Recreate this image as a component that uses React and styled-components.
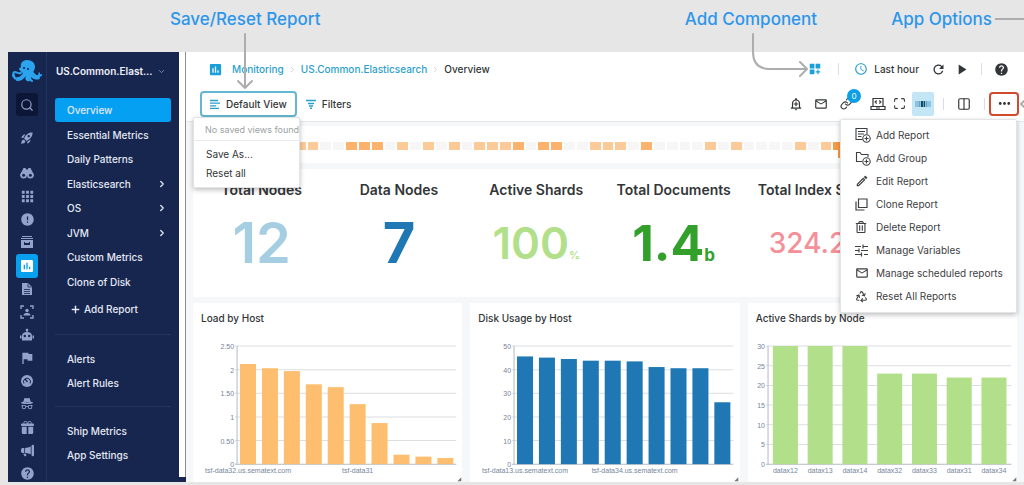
import React from "react";
import styled, { createGlobalStyle } from "styled-components";
import {
  MdAccessTime,
  MdApps,
  MdDashboardCustomize,
  MdError,
  MdFlag,
  MdHelp,
  MdInsertChart,
  MdMailOutline,
  MdMoreHoriz,
  MdOutlineAddAlert,
  MdOutlineEdit,
  MdPlayArrow,
  MdRefresh,
  MdRocketLaunch,
} from "react-icons/md";
import { BsGiftFill, BsIncognito, BsMegaphoneFill } from "react-icons/bs";
import { FaRegTrashAlt } from "react-icons/fa";
import {
  ChevronDown,
  ChevronRight,
  Columns2,
  Link as LinkIcon,
  Maximize,
  Plus,
  Recycle,
  Search,
} from "lucide-react";

const GlobalStyle = createGlobalStyle`
  * {
    box-sizing: border-box;
  }

  body {
    margin: 0;
    background: #e6e6e6;
    font-family: Inter, "Liberation Sans", sans-serif;
    font-size: 10px;
    color: #333638;
  }

  button {
    font: inherit;
    color: inherit;
    background: none;
    border: 0;
    padding: 0;
  }

  svg {
    display: block;
    flex: none;
  }
`;

const Page = styled.div`
  display: flex;
  flex-direction: column;
  overflow: hidden;
`;

/* callouts above the app */

const Callouts = styled.div`
  display: flex;
  align-items: center;
  height: 52px;
  padding: 0 0 14px 170px;
`;

const Callout = styled.div`
  position: relative;
  font-size: 17px;
  line-height: 20px;
  font-weight: 500;
  color: #2d96ea;
  white-space: nowrap;
  margin-left: ${(props) => (props.$push ? "auto" : "0")};
  margin-right: ${(props) => props.$after || "0"};
`;

const CalloutArrow = styled.svg`
  position: absolute;
  z-index: 5;
  top: 24px;
  left: ${(props) => props.$left};
  fill: none;
  stroke: #adadad;
  stroke-width: 2;
  stroke-linecap: round;
  stroke-linejoin: round;
`;

const CalloutLine = styled.div`
  width: 29px;
  height: 2px;
  background: #adadad;
`;

const Shell = styled.div`
  display: flex;
  margin: 0 0 3px 8px;
  background: #ffffff;
`;

/* left navigation */

const Rail = styled.nav`
  display: flex;
  flex-direction: column;
  align-items: center;
  width: 39px;
  padding-top: 7px;
  background: #17264f;
  border-right: 1px solid #24345f;
`;

const RailTop = styled.div`
  display: flex;
  flex-direction: column;
  align-items: center;
  gap: 10px;
  margin-bottom: 16px;
`;

const RailList = styled.div`
  display: flex;
  flex-direction: column;
  justify-content: space-between;
  height: 317px;
`;

const RailButton = styled.button`
  display: flex;
  align-items: center;
  justify-content: center;
  width: 22px;
  height: 23px;
  border-radius: 3px;
  color: #93a2c9;
  background: ${(props) => (props.$dark ? "#0c1738" : "transparent")};
`;

const RailLink = styled(RailButton)`
  height: ${(props) => (props.$active ? "24px" : "16px")};
  margin: ${(props) => (props.$active ? "-4px 0" : "0")};
  color: ${(props) => (props.$active ? "#ffffff" : "#93a2c9")};
  background: ${(props) => (props.$active ? "#06a0ee" : "transparent")};
`;

const Sidebar = styled.nav`
  width: 132px;
  padding: 7px 8px 0;
  background: #17264f;
  color: #e4e9f5;
`;

const AppName = styled.button`
  display: flex;
  align-items: center;
  justify-content: space-between;
  width: 100%;
  height: 24px;
  padding: 0 5px 0 1px;
  font-weight: 600;
  color: #eef1f9;
`;

const MenuList = styled.div`
  display: flex;
  flex-direction: column;
  justify-content: space-between;
  height: 196px;
  margin: 15px 0 3px;
`;

const MenuGroup = styled.div`
  border-top: 1px solid #24345f;
  padding: 12px 0 11px;
`;

const MenuItem = styled.a`
  display: flex;
  align-items: center;
  justify-content: space-between;
  height: 24px;
  padding: 0 4px 0 12px;
  border-radius: 3px;
  font-weight: 500;
  text-decoration: none;
  color: inherit;
  background: ${(props) => (props.$active ? "#06a0f2" : "transparent")};
`;

const AddButton = styled.button`
  display: flex;
  align-items: center;
  gap: 3px;
  height: 24px;
  padding-left: 15px;
  margin-bottom: 13px;
  font-weight: 500;
`;

const Gutter = styled.div`
  width: 7px;
  margin-bottom: 5px;
  background: #ffffff;
  border-right: 1px solid #8e8e8e;
`;

const NavWrap = styled.div`
  display: flex;
  flex: none;
  background: #17264f;
`;

/* main area */

const Main = styled.main`
  flex: 1;
  min-width: 0;
  background: #f5f7f9;
`;

const Header = styled.header`
  background: #ffffff;
  border-bottom: 1px solid #e3e7ea;
`;

const Bar = styled.div`
  display: flex;
  align-items: center;
  justify-content: space-between;
  height: ${(props) => (props.$low ? "35px" : "34px")};
  padding: ${(props) => (props.$low ? "0 5px 0 14px" : "0 15px 0 22px")};
`;

const Group = styled.div`
  display: flex;
  align-items: center;
  gap: ${(props) => props.$gap || "0"};
`;

const Crumb = styled.a`
  font-weight: 500;
  text-decoration: none;
  color: ${(props) => (props.$current ? "#333638" : "#2b9fcb")};
`;

const IconButton = styled.button`
  display: flex;
  align-items: center;
  justify-content: center;
  gap: 6px;
  min-width: 16px;
  height: 24px;
  font-weight: 500;
  position: relative;
  color: ${(props) => props.$color || "#333638"};
`;

const Separator = styled.span`
  width: 1px;
  height: 12px;
  background: #dcdfe2;
`;

const Anchor = styled.div`
  position: relative;
`;

const ViewButton = styled.button`
  display: flex;
  align-items: center;
  gap: 6px;
  height: 26px;
  padding: 0 8px;
  border: 2px solid #63b7d1;
  border-radius: 4px;
  font-weight: 500;
`;

const Badge = styled.span`
  position: absolute;
  top: -3px;
  left: 9px;
  width: 14px;
  height: 14px;
  border-radius: 7px;
  background: #0d9ee3;
  color: #d9f1fc;
  font-size: 8px;
  line-height: 14px;
  text-align: center;
`;

const HeatToggle = styled.button`
  display: flex;
  align-items: center;
  justify-content: center;
  width: 22px;
  height: 24px;
  border-radius: 2px;
  background: #c3e6f7;
`;

const MoreButton = styled.button`
  display: flex;
  align-items: center;
  justify-content: center;
  width: 30px;
  height: 24px;
  border: 2px solid #d24a2e;
  border-radius: 4px;
`;

const MorePointer = styled.svg`
  position: absolute;
  top: 8px;
  left: 31px;
  fill: none;
  stroke: #adadad;
  stroke-width: 2;
`;

const Popup = styled.div`
  position: absolute;
  z-index: 4;
  background: #ffffff;
  border: 1px solid #e2e4e6;
  border-radius: 2px;
  box-shadow: 0 2px 5px rgba(0, 0, 0, 0.25);
`;

const ViewPopup = styled(Popup)`
  top: 26px;
  left: -7px;
  min-width: 104px;
  padding-bottom: 4px;
`;

const PopupNote = styled.div`
  height: 23px;
  margin-bottom: 4px;
  padding-left: 11px;
  border-bottom: 1px solid #e8eaec;
  font-size: 9px;
  line-height: 23px;
  color: #9b9fa3;
  white-space: nowrap;
`;

const PopupItem = styled.button`
  display: block;
  width: 100%;
  height: 19px;
  padding-left: 12px;
  text-align: left;
`;

const OptionsPopup = styled(Popup)`
  top: 27px;
  right: 2px;
  width: 177px;
  padding: 4px 0;
`;

const OptionItem = styled.button`
  display: flex;
  align-items: center;
  gap: 5px;
  width: 100%;
  height: 23px;
  padding-left: 14px;
  white-space: nowrap;
  color: #3d4043;
`;

const OptionIcon = styled.span`
  display: flex;
  width: 16px;
`;

const Content = styled.div`
  display: grid;
  gap: 6px;
  padding: 4px 7px 0;
`;

const HeatCard = styled.div`
  display: grid;
  grid-template-columns: repeat(63, 1fr);
  column-gap: 2px;
  padding: 16px 6px 13px 12px;
  background: #ffffff;
`;

const heatColors = ["#f6f6f6", "#fcc998", "#fbb26c", "#f79b45"];

const HeatCell = styled.span`
  position: relative;
  height: 8px;
  background: ${(props) => heatColors[props.$level]};

  /* the hottest cell carries the time marker */
  &::after {
    content: "";
    display: ${(props) => (props.$level === "3" ? "block" : "none")};
    position: absolute;
    top: 0;
    left: 5px;
    width: 2px;
    height: 16px;
    background: #f79b45;
  }
`;

const Metrics = styled.div`
  display: grid;
  grid-template-columns: repeat(6, 1fr);
  height: 128px;
  background: #ffffff;
`;

const Metric = styled.section`
  display: flex;
  flex-direction: column;
  align-items: center;
  white-space: nowrap;
`;

const MetricTitle = styled.h2`
  margin: 12px 0 0;
  font-size: 14px;
  line-height: 18px;
  font-weight: 600;
`;

const MetricValue = styled.div`
  display: flex;
  align-items: baseline;
  line-height: 88px;
  font-weight: ${(props) => props.$weight};
  font-size: ${(props) => props.$size};
  color: ${(props) => props.$color};
`;

const MetricUnit = styled.span`
  font-size: ${(props) => props.$size};
  line-height: 20px;
`;

const Charts = styled.div`
  display: grid;
  grid-template-columns: repeat(3, 1fr);
  gap: 8px;
`;

const ChartCard = styled.section`
  background: #ffffff;
`;

const ChartTitle = styled.h3`
  margin: 0;
  padding: 8px 8px 0;
  font-size: 10px;
  line-height: 14px;
  font-weight: 500;
`;

const ChartSvg = styled.svg`
  width: 100%;
  height: auto;

  text {
    font-family: "Liberation Sans", sans-serif;
    font-size: 7px;
    fill: #75859b;
  }
`;

/* icons */

const Octopus = () => (
  <svg width="30" height="24" viewBox="0 0 30 24" fill="none">
    <path
      d="M9 8C8 4 11 1 15 1c5 0 8 3 8 7 0 3-2 4-2 6 0 3 3 4 5 2 1-1 0-2 1-3 2 1 1 5-2 6-2 1-4 0-6-1 1 3-1 5-4 4-2-1-2-3-1-5-2 2-5 5-9 4-3 0-5-3-4-5 1-1 2-1 2 0 0 2 1 3 3 2 2 0 4-2 5-4-2-1-3-2-4-4 0-1 1-2 2-1z"
      fill="#2ba3ee"
    />
    <path
      d="M9 14c-3 1-4-1-6-1-2 0-2 2-2 4M12 17c-1 3-4 4-7 4M17 17c0 3 2 4 3 5M21 14c2 3 5 5 8 2M19 16c2 4 6 4 8 3"
      stroke="#2ba3ee"
      strokeWidth="2"
      strokeLinecap="round"
    />
    <circle cx="12" cy="9" r="1" fill="#17264f" />
    <circle cx="16" cy="10" r="1" fill="#17264f" />
  </svg>
);

const BinocularsIcon = () => (
  <svg width="14" height="14" viewBox="0 0 14 14" fill="currentColor">
    <path d="M3.500 2h2l.8 1.500h1.400L8.500 2h2L13.500 8v2H.5V8z" />
    <circle cx="3.600" cy="9.300" r="3.300" />
    <circle cx="10.400" cy="9.300" r="3.300" />
    <circle cx="3.600" cy="9.300" r="1.500" fill="#17264f" />
    <circle cx="10.400" cy="9.300" r="1.500" fill="#17264f" />
  </svg>
);

const RobotIcon = () => (
  <svg width="14" height="14" viewBox="0 0 14 14" fill="currentColor">
    <circle cx="7" cy="2" r="1.300" />
    <path d="M6.500 2h1v3h-1zM0 7.500h1.500v3H0zM12.500 7.500H14v3h-1.500z" />
    <path d="M2 8c0-2.500 2-4 5-4s5 1.500 5 4v4.500H2z" />
    <circle cx="4.800" cy="8" r="1.200" fill="#17264f" />
    <circle cx="9.200" cy="8" r="1.200" fill="#17264f" />
  </svg>
);

const ArchiveIcon = () => (
  <svg width="14" height="14" viewBox="0 0 14 14" fill="currentColor">
    <path d="M2 1h10v1H2zM1 3h12v1H1z" />
    <path fillRule="evenodd" d="M1 5h12v8H1zM4 7v3h6V7H9v1H5V7z" />
  </svg>
);

const DocIcon = () => (
  <svg width="14" height="14" viewBox="0 0 14 14">
    <path d="M2 1h6l4 4v8H2z" fill="currentColor" />
    <path
      d="M8 1.500v3.500h3.500M4 7.500h6M4 9.500h6M4 11.500h6"
      stroke="#17264f"
      strokeWidth="0.8"
      fill="none"
    />
  </svg>
);

const ScanIcon = () => (
  <svg width="14" height="14" viewBox="0 0 14 14" fill="none">
    <path
      d="M1 4V1h3M10 1h3v3M13 10v3h-3M4 13H1v-3"
      stroke="currentColor"
      strokeWidth="1.400"
    />
    <circle cx="7" cy="5.500" r="1.700" fill="currentColor" />
    <path d="M3.500 10.500c0-2 2-2.500 3.500-2.500s3.500.5 3.500 2.500z" fill="currentColor" />
  </svg>
);

const GaugeIcon = () => (
  <svg width="14" height="14" viewBox="0 0 14 14" fill="none">
    <circle cx="7" cy="7" r="6" fill="currentColor" />
    <path d="M4 9.500A3.500 3.500 0 1 1 10 9.500" stroke="#17264f" strokeWidth="1" />
    <path d="M5 5l2.500 3" stroke="#17264f" strokeWidth="1.200" />
  </svg>
);

const ViewLinesIcon = () => (
  <svg width="10" height="10" viewBox="0 0 10 10" stroke="#2b9fcb" strokeWidth="1.300">
    <path d="M0 1.500h8M0 4.200h10M0 6.800h6M0 9.300h9" />
  </svg>
);

const FilterIcon = () => (
  <svg width="10" height="10" viewBox="0 0 10 10" stroke="#2b9fcb" strokeWidth="1.400">
    <path d="M0 1.500h10M2 4.500h6M3 7h4M4 9.300h2" />
  </svg>
);

const LaptopIcon = () => (
  <svg width="16" height="14" viewBox="0 0 16 14" fill="none" stroke="currentColor" strokeWidth="1.200">
    <path d="M3 9V1.500h10V9M1 9.500h14v3H1zM6 11h4M6.700 3.500L5.200 5l1.500 1.500M9.300 3.500L10.800 5 9.300 6.500" />
  </svg>
);

const HeatIcon = () => (
  <svg width="16" height="6" viewBox="0 0 16 6">
    <path d="M0 0h3v6H0zM13 0h3v6h-3z" fill="#8ec3dc" />
    <path d="M3.500 0h2v6h-2zM10.500 0h2v6h-2z" fill="#5fa4c4" />
    <path d="M6 0h2v6H6zM8.500 0h1.500v6H8.500z" fill="#174a66" />
  </svg>
);

const AddReportIcon = () => (
  <svg width="16" height="16" viewBox="0 0 16 16" fill="none" stroke="currentColor" strokeWidth="1.100">
    <path d="M7.500 12.500H1v-11h11V7M3 4.500h7M3 7h6M3 9.500h3.500" />
    <circle cx="11.500" cy="11.500" r="3.700" />
    <path d="M11.500 9.500v4M9.500 11.500h4" />
  </svg>
);

const AddGroupIcon = () => (
  <svg width="16" height="16" viewBox="0 0 16 16" fill="none" stroke="currentColor" strokeWidth="1.100">
    <path d="M7 11.500H1.500v-9H5L6.500 4.500H13V7" />
    <circle cx="11.500" cy="11.500" r="3.700" />
    <path d="M11.500 9.500v4M9.500 11.500h4" />
  </svg>
);

const CloneIcon = () => (
  <svg width="13" height="13" viewBox="0 0 13 13" fill="none" stroke="currentColor" strokeWidth="1.200">
    <path d="M3.500 1h8.500v8.500H3.500zM1 3.500V12h8.500" />
  </svg>
);

const VariablesIcon = () => (
  <svg width="13" height="13" viewBox="0 0 13 13" fill="none" stroke="currentColor" strokeWidth="1.200">
    <path d="M0 2.500h6M8 2.500h5M8 .5v4M0 6.500h4M6 6.500h7M4 4.500v4M0 10.500h6M9 10.500h4M6.500 8.500v4" />
  </svg>
);

/* data */

const railItems = [
  ["Discovery", <BinocularsIcon />],
  ["Apps", <MdApps size={17} />],
  ["Events", <MdError size={15} />],
  ["Logs", <ArchiveIcon />],
  ["Monitoring", <MdInsertChart size={16} />, true],
  ["Reports", <DocIcon />],
  ["Experience", <ScanIcon />],
  ["Synthetics", <RobotIcon />],
  ["Flags", <MdFlag size={16} />],
  ["Dashboards", <GaugeIcon />],
  ["Privacy", <BsIncognito size={14} />],
  ["Gifts", <BsGiftFill size={13} />],
  ["News", <BsMegaphoneFill size={13} />],
  ["Help", <MdHelp size={15} />],
];

const menuItems = [
  { label: "Overview", active: true },
  { label: "Essential Metrics" },
  { label: "Daily Patterns" },
  { label: "Elasticsearch", nested: true },
  { label: "OS", nested: true },
  { label: "JVM", nested: true },
  { label: "Custom Metrics" },
  { label: "Clone of Disk" },
];

const options = [
  ["Add Report", <AddReportIcon />],
  ["Add Group", <AddGroupIcon />],
  ["Edit Report", <MdOutlineEdit size={14} />],
  ["Clone Report", <CloneIcon />],
  ["Delete Report", <FaRegTrashAlt size={12} />],
  ["Manage Variables", <VariablesIcon />],
  ["Manage scheduled reports", <MdMailOutline size={14} />],
  ["Reset All Reports", <Recycle size={13} />],
];

const heat =
  "000000011002220101010111202200111020000101000010130000000000000";

const metrics = [
  { title: "Total Nodes", value: "12", size: "56px", weight: 600, color: "#a6cee3" },
  { title: "Data Nodes", value: "7", size: "56px", weight: 700, color: "#1f78b4" },
  { title: "Active Shards", value: "100", unit: "%", unitSize: "11px", size: "44px", weight: 600, color: "#b2df8a" },
  { title: "Total Documents", value: "1.4", unit: "b", unitSize: "17px", size: "50px", weight: 700, color: "#33a02c" },
  { title: "Total Index Size", value: "324.2", unit: "g", unitSize: "11px", size: "28px", weight: 500, color: "#f4909a" },
];

const charts = [
  {
    title: "Load by Host",
    color: "#fdbf6f",
    left: 44,
    max: 2.5,
    barWidth: 16,
    ticks: ["0", "0.50", "1", "1.50", "2", "2.50"],
    values: [2.12, 2.03, 1.97, 1.69, 1.63, 1.27, 0.87, 0.2, 0.16, 0.13],
    labels: { 0: "tsf-data32.us.sematext.com", 5: "tsf-data31" },
  },
  {
    title: "Disk Usage by Host",
    color: "#1f78b4",
    left: 44,
    max: 50,
    barWidth: 16,
    ticks: ["0", "10", "20", "30", "40", "50"],
    values: [45.6, 45.1, 44.5, 43.8, 43.8, 43.5, 41.1, 40.6, 40.6, 26.2],
    labels: { 0: "tsf-data13.us.sematext.com", 5: "tsf-data34.us.sematext.com" },
  },
  {
    title: "Active Shards by Node",
    color: "#b2df8a",
    left: 20,
    max: 30,
    barWidth: 25,
    ticks: ["0", "5", "10", "15", "20", "25", "30"],
    values: [30, 30, 30, 23, 23, 22, 22],
    labels: ["datax12", "datax13", "datax14", "datax32", "datax33", "datax31", "datax34"],
  },
];

const BarChart = ({ chart }) => {
  const top = 21;
  const bottom = 139;
  const right = 263;
  const step = (right - chart.left) / chart.values.length;
  const center = (i) => chart.left + step * (i + 0.5);

  return (
    <ChartSvg viewBox="0 0 269 157" role="img" aria-label={chart.title}>
      {chart.ticks.map((tick, i) => {
        const y = bottom - ((bottom - top) * i) / (chart.ticks.length - 1);
        return (
          <g key={tick}>
            <path
              d={`M${chart.left - 2} ${y}H${right}`}
              stroke={i === 0 ? "#b4bac2" : "#dcdee1"}
            />
            <text x={chart.left - 3} y={y + 3} textAnchor="end">
              {tick}
            </text>
          </g>
        );
      })}
      <path d={`M${chart.left} ${top}V${bottom}`} stroke="#b4bac2" />
      {chart.values.map((value, i) => {
        const height = ((bottom - top) * value) / chart.max;
        return (
          <rect
            key={i}
            x={center(i) - chart.barWidth / 2}
            y={bottom - height}
            width={chart.barWidth}
            height={height}
            fill={chart.color}
          />
        );
      })}
      {Object.entries(chart.labels).map(([i, label]) => (
        <text key={i} x={center(Number(i))} y={148} textAnchor="middle">
          {label}
        </text>
      ))}
      <path d="M268 152v4h-4z" fill="#777777" />
    </ChartSvg>
  );
};

const Navigation = () => (
  <NavWrap>
    <Rail aria-label="Products">
      <RailTop>
        <Octopus />
        <RailButton $dark aria-label="Search">
          <Search size={14} />
        </RailButton>
        <RailButton aria-label="Get started">
          <MdRocketLaunch size={14} />
        </RailButton>
      </RailTop>
      <RailList>
        {railItems.map(([label, icon, active]) => (
          <RailLink key={label} aria-label={label} $active={active}>
            {icon}
          </RailLink>
        ))}
      </RailList>
    </Rail>
    <Sidebar aria-label="Reports">
      <AppName>
        US.Common.Elast...
        <ChevronDown size={9} color="#93a2c9" />
      </AppName>
      <MenuList>
        {menuItems.map((item) => (
          <MenuItem key={item.label} href="#" $active={item.active}>
            {item.label}
            {item.nested && <ChevronRight size={10} strokeWidth={3} />}
          </MenuItem>
        ))}
      </MenuList>
      <AddButton>
        <Plus size={11} strokeWidth={3} />
        Add Report
      </AddButton>
      <MenuGroup>
        <MenuItem href="#">Alerts</MenuItem>
        <MenuItem href="#">Alert Rules</MenuItem>
      </MenuGroup>
      <MenuGroup>
        <MenuItem href="#">Ship Metrics</MenuItem>
        <MenuItem href="#">App Settings</MenuItem>
      </MenuGroup>
    </Sidebar>
    <Gutter />
  </NavWrap>
);

const Toolbar = () => (
  <Header>
    <Bar>
      <Group $gap="9px">
        <MdInsertChart size={15} color="#1a9fd8" />
        <Group $gap="4px">
          <Crumb href="#">Monitoring</Crumb>
          <ChevronRight size={9} color="#c4c8cc" />
          <Crumb href="#">US.Common.Elasticsearch</Crumb>
          <ChevronRight size={9} color="#c4c8cc" />
          <Crumb href="#" $current>
            Overview
          </Crumb>
        </Group>
      </Group>
      <Group $gap="11px">
        <Group $gap="15px">
          <IconButton $color="#1a9fd8" aria-label="Add component">
            <MdDashboardCustomize size={14} />
          </IconButton>
          <Separator />
          <IconButton>
            <MdAccessTime size={14} color="#2b9fcb" />
            Last hour
          </IconButton>
        </Group>
        <Group $gap="7px">
          <IconButton aria-label="Refresh">
            <MdRefresh size={15} />
          </IconButton>
          <IconButton aria-label="Play">
            <MdPlayArrow size={17} />
          </IconButton>
        </Group>
        <Separator />
        <IconButton aria-label="Help">
          <MdHelp size={15} />
        </IconButton>
      </Group>
    </Bar>
    <Bar $low>
      <Group $gap="9px">
        <Anchor>
          <ViewButton>
            <ViewLinesIcon />
            Default View
          </ViewButton>
          <ViewPopup>
            <PopupNote>No saved views found</PopupNote>
            <PopupItem>Save As...</PopupItem>
            <PopupItem>Reset all</PopupItem>
          </ViewPopup>
        </Anchor>
        <IconButton>
          <FilterIcon />
          Filters
        </IconButton>
      </Group>
      <Group $gap="4px">
        <Group $gap="9px">
          <Group $gap="16px">
            <Group $gap="9px">
              <IconButton aria-label="Add alert">
                <MdOutlineAddAlert size={14} />
              </IconButton>
              <IconButton aria-label="Email report">
                <MdMailOutline size={14} />
              </IconButton>
              <IconButton aria-label="Share link">
                <LinkIcon size={13} />
                <Badge>0</Badge>
              </IconButton>
            </Group>
            <Group $gap="5px">
              <IconButton aria-label="Embed">
                <LaptopIcon />
              </IconButton>
              <IconButton aria-label="Full screen">
                <Maximize size={13} />
              </IconButton>
              <HeatToggle aria-label="Toggle heat map">
                <HeatIcon />
              </HeatToggle>
            </Group>
          </Group>
          <Group $gap="12px">
            <Separator />
            <IconButton aria-label="Layout">
              <Columns2 size={14} />
            </IconButton>
            <Separator />
          </Group>
        </Group>
        <Anchor>
          <MoreButton aria-label="App options">
            <MdMoreHoriz size={17} />
          </MoreButton>
          <MorePointer width="5" height="8" viewBox="0 0 5 8">
            <path d="M5 0L1 4l4 4" />
          </MorePointer>
          <OptionsPopup>
            {options.map(([label, icon]) => (
              <OptionItem key={label}>
                <OptionIcon>{icon}</OptionIcon>
                {label}
              </OptionItem>
            ))}
          </OptionsPopup>
        </Anchor>
      </Group>
    </Bar>
  </Header>
);

const App = () => {
  return (
    <Page>
      <GlobalStyle />
      <Callouts>
        <Callout>
          Save/Reset Report
          <CalloutArrow $left="66px" width="18" height="58" viewBox="0 0 18 58">
            <path d="M9 1v54M2 48l7 7 7-7" />
          </CalloutArrow>
        </Callout>
        <Callout $push $after="74px">
          Add Component
          <CalloutArrow $left="67px" width="58" height="46" viewBox="0 0 58 46">
            <path d="M1 1v18q0 17 17 17h37M48 29l7 7-7 7" />
          </CalloutArrow>
        </Callout>
        <Callout $after="3px">App Options</Callout>
        <CalloutLine />
      </Callouts>
      <Shell>
        <Navigation />
        <Main>
          <Toolbar />
          <Content>
            <HeatCard>
              {heat.split("").map((level, i) => (
                <HeatCell key={i} $level={level} />
              ))}
            </HeatCard>
            <Metrics>
              {metrics.map((metric) => (
                <Metric key={metric.title}>
                  <MetricTitle>{metric.title}</MetricTitle>
                  <MetricValue
                    $size={metric.size}
                    $weight={metric.weight}
                    $color={metric.color}
                  >
                    {metric.value}
                    {metric.unit && (
                      <MetricUnit $size={metric.unitSize}>{metric.unit}</MetricUnit>
                    )}
                  </MetricValue>
                </Metric>
              ))}
            </Metrics>
            <Charts>
              {charts.map((chart) => (
                <ChartCard key={chart.title}>
                  <ChartTitle>{chart.title}</ChartTitle>
                  <BarChart chart={chart} />
                </ChartCard>
              ))}
            </Charts>
          </Content>
        </Main>
      </Shell>
    </Page>
  );
};

export default App;
